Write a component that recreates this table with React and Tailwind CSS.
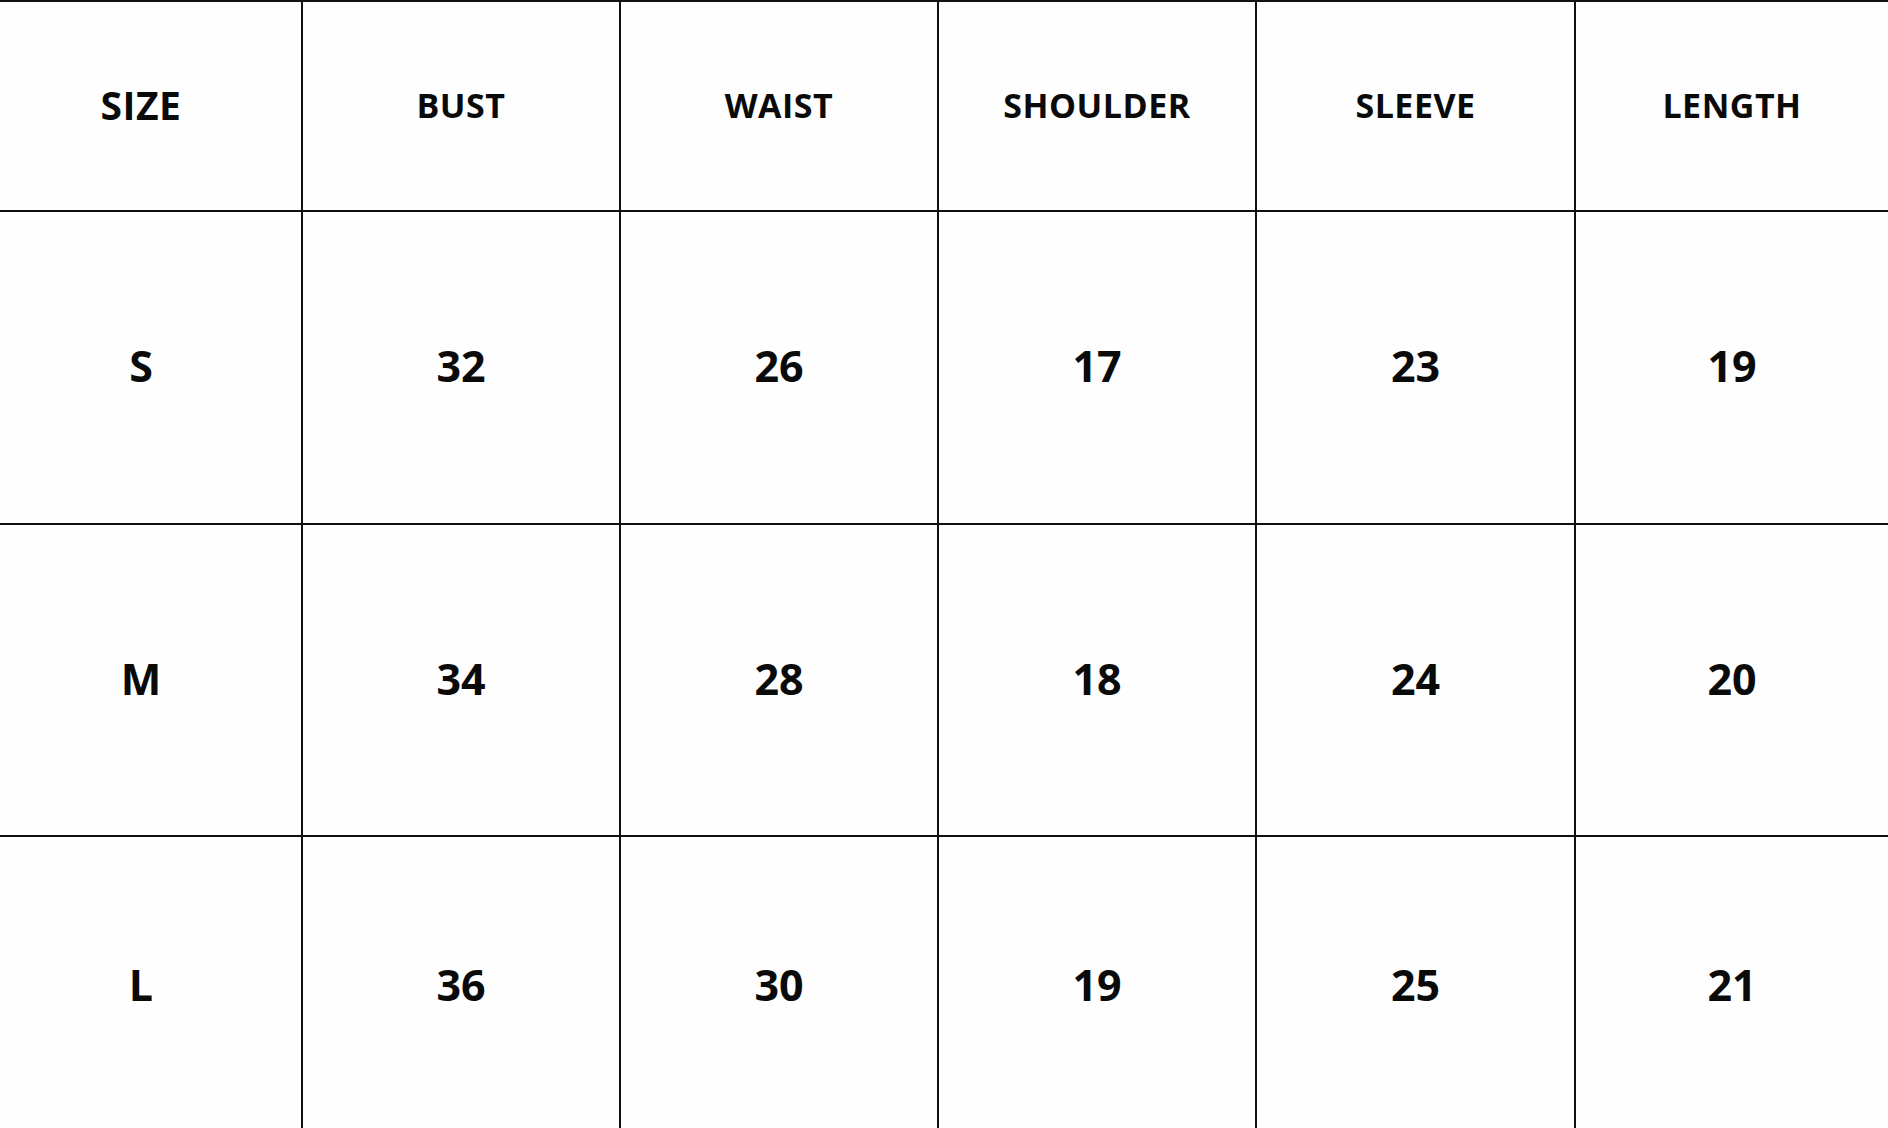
const headers = ["BUST", "WAIST", "SHOULDER", "SLEEVE", "LENGTH"];

const rows = [
  { size: "S", values: ["32", "26", "17", "23", "19"] },
  { size: "M", values: ["34", "28", "18", "24", "20"] },
  { size: "L", values: ["36", "30", "19", "25", "21"] },
];

const rowHeights = ["h-[313px]", "h-[312px]", "h-[300px]"];

function Cell({ children, className, last }) {
  return (
    <div
      className={`flex items-center justify-center border-b-2 border-[#111] ${
        last ? "" : "border-r-2"
      } ${className}`}
    >
      {children}
    </div>
  );
}

export default function App() {
  return (
    <div
      className="h-screen w-full overflow-hidden bg-[#fefefe] text-[#0a0a0a]"
      style={{ fontFamily: '"Open Sans", "Liberation Sans", sans-serif' }}
    >
      <div className="grid grid-cols-[303px_318px_318px_318px_319px_1fr] border-t-2 border-[#111]">
        <Cell className="h-[210px] pr-[19px] pb-[2px] text-[39px] font-bold tracking-[0.5px]">
          SIZE
        </Cell>
        {headers.map((h, i) => (
          <Cell
            key={h}
            last={i === headers.length - 1}
            className="h-[210px] pb-[2px] text-[34px] font-bold tracking-[0.5px]"
          >
            {h}
          </Cell>
        ))}

        {rows.map((row, r) => (
          <>
            <Cell
              key={row.size}
              className={`${rowHeights[r]} pr-[19px] pb-[2px] text-[43px] font-bold`}
            >
              {row.size}
            </Cell>
            {row.values.map((v, i) => (
              <Cell
                key={row.size + i}
                last={i === row.values.length - 1}
                className={`${rowHeights[r]} pb-[2px] text-[43px] font-bold`}
              >
                {v}
              </Cell>
            ))}
          </>
        ))}
      </div>
    </div>
  );
}
